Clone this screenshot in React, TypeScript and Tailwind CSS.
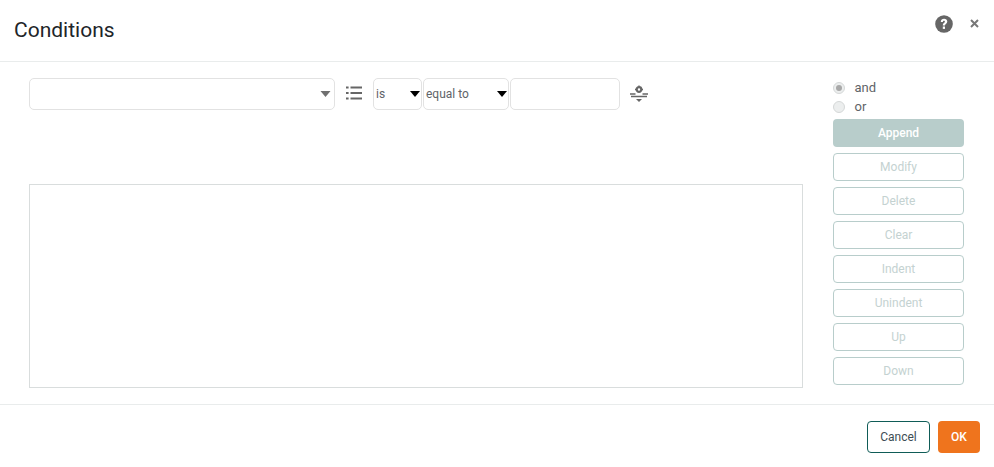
const actions = ['Modify', 'Delete', 'Clear', 'Indent', 'Unindent', 'Up', 'Down']

function Caret({ className }: { className: string }) {
  return (
    <svg width="10" height="6" viewBox="0 0 10 6" className={className}>
      <path d="M0 0h10L5 6z" fill="currentColor" />
    </svg>
  )
}

function SmallSelect({ label, width }: { label: string; width: string }) {
  return (
    <div className={`${width} h-8 flex items-center justify-between border border-[#e2e2e2] rounded-[5px] pl-[2px] pr-px text-[12px] text-[#5f6468]`}>
      <span>{label}</span>
      <Caret className="text-black" />
    </div>
  )
}

export default function App() {
  return (
    <div className="w-[994px] h-[467px] bg-white flex flex-col font-['Roboto',sans-serif] overflow-hidden">
      <header className="h-[62px] shrink-0 border-b border-[#e9ecec] flex items-center justify-between pl-[14px] pr-[15px]">
        <h1 className="text-[21px] font-normal text-[#212529]">Conditions</h1>
        <div className="flex items-center gap-[17px] mb-[14px]">
          <svg width="18" height="18" viewBox="0 0 18 18">
            <circle cx="9" cy="9" r="8.800" fill="#666" />
            <path d="M5.800 7c0-2 1.400-3.200 3.300-3.200 1.800 0 3.200 1.100 3.200 2.800 0 2.200-2.300 2.200-2.300 3.900H7.800c0-2.600 2.100-2.700 2.100-3.800 0-.6-.4-1-1-1-.7 0-1 .5-1 1.300z" fill="#fff" />
            <rect x="7.800" y="11.500" width="2.200" height="2.400" fill="#fff" />
          </svg>
          <svg width="9" height="9" viewBox="0 0 9 9">
            <path d="M1 1l7 7M8 1L1 8" stroke="#777" strokeWidth="2" />
          </svg>
        </div>
      </header>

      <main className="flex-1 flex pl-[29px] pr-[30px] pt-4 min-h-0">
        <div className="w-[774px] flex flex-col">
          <div className="flex items-start h-[106px]">
            <div className="w-[306px] h-8 border border-[#e2e2e2] rounded-[5px] flex items-center justify-end pr-[3px]">
              <Caret className="text-[#707070] w-[11px]" />
            </div>
            <svg width="16" height="14" viewBox="0 0 16 14" className="ml-[11px] mt-2 text-[#666]">
              <path d="M0 1.500h2.600M0 7h2.600M0 12.500h2.600M4.500 1.500H16M4.500 7H16M4.500 12.500H16" stroke="currentColor" strokeWidth="1.800" fill="none" />
            </svg>
            <div className="ml-[11px] flex gap-px">
              <SmallSelect label="is" width="w-[49px]" />
              <SmallSelect label="equal to" width="w-[86px]" />
              <div className="w-[110px] h-8 border border-[#e2e2e2] rounded-[5px]" />
            </div>
            <svg width="18" height="18" viewBox="0 0 18 18" className="ml-[10px] mt-[7px] text-[#666]">
              <circle cx="9" cy="4.500" r="2.300" fill="none" stroke="currentColor" strokeWidth="2.200" />
              <path d="M9 0.500v1M5 4.500h1M12 4.500h1" stroke="currentColor" strokeWidth="1.400" />
              <path d="M0 9h5.500M12.500 9H18M1 11.500h16" stroke="currentColor" strokeWidth="1.500" />
              <path d="M6 14h6L9 17z" fill="currentColor" />
            </svg>
          </div>
          <div className="w-[774px] h-[204px] border border-[#d9dddd]" />
        </div>

        <aside className="w-[131px] ml-[30px] flex flex-col">
          <div className="flex items-center h-[19px] text-[13px] text-[#5f6468]">
            <span className="w-3 h-3 rounded-full border border-[#d5d8d8] bg-[#eceeee] flex items-center justify-center">
              <span className="w-[6px] h-[6px] rounded-full bg-[#a8a8a8]" />
            </span>
            <span className="ml-[9.500px]">and</span>
          </div>
          <div className="flex items-center h-[19px] text-[13px] text-[#5f6468]">
            <span className="w-3 h-3 rounded-full border border-[#d5d8d8] bg-[#eceeee]" />
            <span className="ml-[9.500px]">or</span>
          </div>
          <button type="button" className="mt-[3px] h-7 rounded-[4px] bg-[#b8cdcb] text-white text-[12px] font-medium">
            Append
          </button>
          <div className="mt-[6px] flex flex-col gap-[6px]">
            {actions.map((a) => (
              <button
                key={a}
                type="button"
                className="h-7 rounded-[4px] border border-[#b8cdcb] bg-white text-[#c4d2d1] text-[12px]"
              >
                {a}
              </button>
            ))}
          </div>
        </aside>
      </main>

      <footer className="h-[63px] shrink-0 border-t border-[#e9ecec] flex items-start justify-end gap-2 pt-4 pr-[14px]">
        <button type="button" className="w-[63px] h-8 rounded-[4px] border border-[#0f5c57] bg-white text-[12px] text-[#3d4d54]">
          Cancel
        </button>
        <button type="button" className="w-[42px] h-8 rounded-[4px] bg-[#ef741d] text-white text-[12px] font-medium">
          OK
        </button>
      </footer>
    </div>
  )
}
